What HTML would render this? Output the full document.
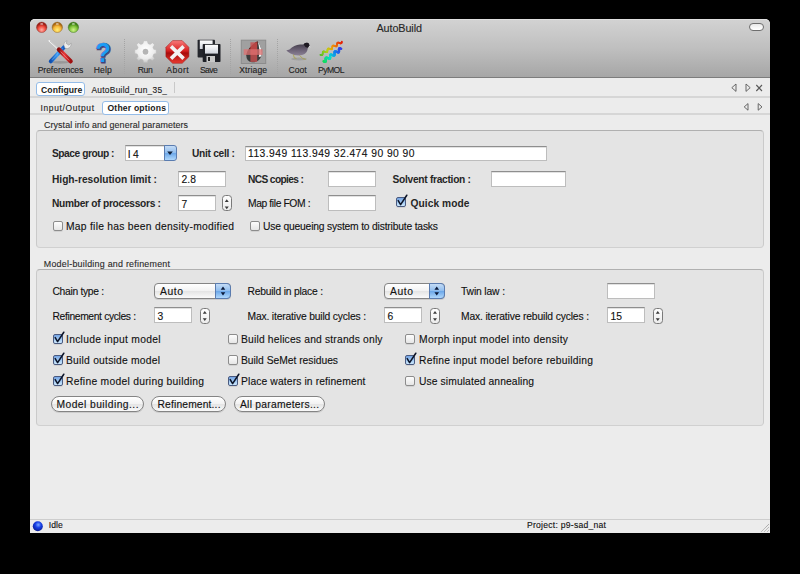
<!DOCTYPE html>
<html><head><meta charset="utf-8">
<style>
html,body{margin:0;padding:0;width:800px;height:574px;overflow:hidden;background:#000;}
body{position:relative;font-family:"Liberation Sans",sans-serif;}
.a{position:absolute;box-sizing:border-box;}
.t{position:absolute;white-space:pre;line-height:normal;font-family:"Liberation Sans",sans-serif;-webkit-text-stroke:0.12px currentColor;}
.win{left:30px;top:18.6px;width:740px;height:514.4px;background:#ececec;border-radius:5px 5px 0 0;overflow:hidden;}
.tb{left:30px;top:18.6px;width:740px;height:58.4px;border-radius:5px 5px 0 0;background:linear-gradient(#d2d2d2,#bfbfbf 50%,#a6a6a6);border-top:1px solid #e0e0e0;}
.grp{background:#e4e4e4;border:1px solid #cacaca;border-top-color:#b0b0b0;border-bottom-color:#d0d0d0;border-radius:4px;}
.fld{background:#fff;border:1px solid #bdbdbd;border-top-color:#8e8e8e;box-shadow:inset 0 1px 0 #e2e2e2;}
.cb{width:10px;height:10px;border:1px solid #8c8c8c;border-radius:2px;background:linear-gradient(#fdfdfd,#e6e6e6);box-shadow:0 1px 0 rgba(0,0,0,0.08);}
.cbc{border-color:#4a5a80;background:linear-gradient(#74a4e4,#a8cef4 60%,#cde8fd);}
.btn{height:16px;border:1px solid #848484;border-radius:8px;background:linear-gradient(#ffffff,#f2f2f2 50%,#e4e4e4 51%,#fafafa);box-shadow:0 1px 0 rgba(0,0,0,0.10);}
.stp{width:10px;height:17px;border:1px solid #7a7a7a;border-radius:3.5px;background:linear-gradient(#fdfdfd,#ececec);}
.sep{border-left:1px dotted #a4a4a4;}
</style></head><body>
<div class="a win"></div>
<div class="a tb"></div>
<div class="a" style="left:30px;top:77px;width:740px;height:1px;background:#7c7c7c"></div>
<!-- traffic lights -->
<svg class="a" style="left:30px;top:18px" width="60" height="20" viewBox="30 18 60 20">
 <defs>
  <radialGradient id="gr" cx="50%" cy="75%" r="60%"><stop offset="0" stop-color="#ffb0a8"/><stop offset="0.6" stop-color="#f04a3c"/><stop offset="1" stop-color="#9a1c14"/></radialGradient>
  <radialGradient id="gy" cx="50%" cy="75%" r="60%"><stop offset="0" stop-color="#fff07a"/><stop offset="0.6" stop-color="#f6b83a"/><stop offset="1" stop-color="#a86410"/></radialGradient>
  <radialGradient id="gg" cx="50%" cy="75%" r="60%"><stop offset="0" stop-color="#d2f48c"/><stop offset="0.6" stop-color="#80c43a"/><stop offset="1" stop-color="#3e7e16"/></radialGradient>
 </defs>
 <circle cx="41.7" cy="27.3" r="5.2" fill="url(#gr)" stroke="#8a3a34" stroke-width="0.5"/>
 <circle cx="57.3" cy="27.3" r="5.2" fill="url(#gy)" stroke="#8a6a30" stroke-width="0.5"/>
 <circle cx="73.4" cy="27.3" r="5.2" fill="url(#gg)" stroke="#4a7a30" stroke-width="0.5"/>
 <ellipse cx="41.7" cy="23.9" rx="1.5" ry="0.9" fill="#fff" opacity="0.55"/>
 <ellipse cx="57.3" cy="23.9" rx="1.5" ry="0.9" fill="#fff" opacity="0.55"/>
 <ellipse cx="73.4" cy="23.9" rx="1.5" ry="0.9" fill="#fff" opacity="0.55"/>
</svg>
<!-- pill -->
<div class="a" style="left:749px;top:23px;width:15px;height:8px;border:1px solid #6e6e6e;border-radius:4px;background:linear-gradient(#e8e8e8,#f8f8f8 60%,#ffffff)"></div>
<!-- toolbar separators -->
<div class="a sep" style="left:124px;top:39px;width:1px;height:35px"></div>
<div class="a sep" style="left:230px;top:39px;width:1px;height:35px"></div>
<div class="a sep" style="left:277px;top:39px;width:1px;height:35px"></div>
<svg class="a" style="left:30px;top:34px" width="330" height="34" viewBox="30 34 330 34">
 <defs>
  <linearGradient id="redh" x1="0" y1="0" x2="1" y2="0"><stop offset="0" stop-color="#8a0c0c"/><stop offset="0.45" stop-color="#e83a3a"/><stop offset="1" stop-color="#a01010"/></linearGradient>
  <linearGradient id="blueh" x1="0" y1="0" x2="1" y2="0"><stop offset="0" stop-color="#1050b0"/><stop offset="0.5" stop-color="#3c9cf4"/><stop offset="1" stop-color="#1258c0"/></linearGradient>
  <radialGradient id="gear" cx="50%" cy="40%" r="60%"><stop offset="0" stop-color="#ffffff"/><stop offset="0.7" stop-color="#ececec"/><stop offset="1" stop-color="#c4c4c4"/></radialGradient>
  <linearGradient id="oct" x1="0" y1="0" x2="0" y2="1"><stop offset="0" stop-color="#f87a7a"/><stop offset="0.45" stop-color="#d82020"/><stop offset="0.55" stop-color="#a80c0c"/><stop offset="1" stop-color="#e83a30"/></linearGradient>
  <linearGradient id="disk" x1="0" y1="0" x2="0" y2="1"><stop offset="0" stop-color="#ffffff"/><stop offset="1" stop-color="#d0d4dc"/></linearGradient>
  <linearGradient id="bird" x1="0" y1="0" x2="0" y2="1"><stop offset="0" stop-color="#3e3844"/><stop offset="0.6" stop-color="#6e6478"/><stop offset="1" stop-color="#8a8094"/></linearGradient>
 </defs>
 <!-- Preferences -->
 <ellipse cx="60.5" cy="62.3" rx="8.5" ry="1.4" fill="#000" opacity="0.14"/>
 <line x1="49.2" y1="40.8" x2="59.5" y2="50.3" stroke="#f6f6f6" stroke-width="1.5" stroke-linecap="round"/>
 <line x1="50" y1="41" x2="59.8" y2="50" stroke="#909090" stroke-width="0.45"/>
 <line x1="64.2" y1="47" x2="50.8" y2="61.4" stroke="url(#blueh)" stroke-width="4" stroke-linecap="round"/>
 <line x1="62.5" y1="48.5" x2="52" y2="59.8" stroke="#7cc4ff" stroke-width="0.8" opacity="0.7"/>
 <line x1="59" y1="49.6" x2="70.6" y2="61.3" stroke="url(#redh)" stroke-width="4.4" stroke-linecap="round"/>
 <line x1="60.6" y1="51.6" x2="69.2" y2="60.4" stroke="#ffa0a0" stroke-width="0.7" opacity="0.8"/>
 <path d="M63.8 45 Q63.6 41.8 67 40.6 L66.2 43.4 L68.8 45.2 L71.2 43.2 Q71.4 47.3 67.6 48.6 L65 48.3 Z" fill="#ececec" stroke="#8a8a8a" stroke-width="0.45"/>
 <!-- Help -->
 <text x="103.8" y="62.8" font-family="Liberation Sans" font-weight="700" font-size="27" text-anchor="middle" fill="#2a2060" stroke="#2a2060" stroke-width="1.0" opacity="0.75" transform="translate(103.2 52) scale(0.95 1) translate(-103.2 -52)">?</text>
 <text x="103.2" y="62.3" font-family="Liberation Sans" font-weight="700" font-size="27" text-anchor="middle" fill="#1c9cf4" stroke="#3a3080" stroke-width="0.6" paint-order="stroke" transform="translate(103.2 52) scale(0.95 1) translate(-103.2 -52)">?</text>
 <!-- Run gear -->
 <g transform="translate(145.5 51.7)">
  <path fill="url(#gear)" stroke="#b8b8b8" stroke-width="0.5" fill-rule="evenodd" d="
   M -1.9 -11 L 1.9 -11 L 2.5 -8.2 L 4.6 -7.3 L 7 -9 L 9.1 -6.9 L 7.4 -4.5 L 8.3 -2.4 L 11 -1.9 L 11 1.9 L 8.3 2.4 L 7.4 4.5 L 9.1 6.9 L 7 9 L 4.6 7.4 L 2.5 8.3 L 1.9 11 L -1.9 11 L -2.5 8.3 L -4.6 7.4 L -7 9 L -9.1 6.9 L -7.4 4.5 L -8.3 2.4 L -11 1.9 L -11 -1.9 L -8.3 -2.4 L -7.4 -4.5 L -9.1 -6.9 L -7 -9 L -4.6 -7.3 L -2.5 -8.2 Z
   M 2.6 0 A 2.6 2.6 0 1 0 -2.6 0 A 2.6 2.6 0 1 0 2.6 0 Z"/>
  <circle r="2.6" fill="#b4b4b4"/>
 </g>
 <!-- Abort -->
 <path d="M172.6 40.6 L182.2 40.6 L188.9 47.3 L188.9 56.7 L182.2 63.3 L172.6 63.3 L165.9 56.7 L165.9 47.3 Z" fill="url(#oct)" stroke="#9a1a1a" stroke-width="0.5"/>
 <path d="M171 46.4 L183.6 58.6 M183.6 46.4 L171 58.6" stroke="#f2f2f2" stroke-width="3.6" stroke-linecap="butt"/>
 <!-- Save -->
 <g>
  <rect x="197.6" y="39.8" width="17.4" height="17.8" rx="0.8" fill="#24262c"/>
  <rect x="199.8" y="40.4" width="12.8" height="8.6" fill="url(#disk)"/>
  <rect x="202.7" y="44" width="17.8" height="18.1" rx="0.8" fill="#1e2026"/>
  <rect x="205" y="44.8" width="13" height="8.8" fill="url(#disk)"/>
  <rect x="206.5" y="56" width="8.5" height="6" fill="#c8c8c8"/>
  <rect x="208" y="57" width="2" height="4" fill="#202020"/>
 </g>
 <!-- Xtriage -->
 <rect x="241.3" y="40.2" width="24.4" height="23.3" fill="#a0a0a0"/>
 <rect x="241.3" y="40.2" width="24.4" height="23.3" fill="none" stroke="#8c8c8c" stroke-width="1"/>
 <path d="M257.6 41.3 Q263.2 49.5 261.2 56.5 Q258.5 62.6 251.8 62.2 Q246 61.2 246.3 54.5 Q247.5 47.5 257.6 41.3 Z" fill="#3a3a3a"/>
 <path d="M257.6 41.3 Q263.2 49.5 261.2 56.5 L258.8 57 Q260.2 49 257.6 41.3 Z" fill="#f0f0f0"/>
 <path d="M257.6 41.3 Q252 44 249 49 L256 50 Q257.5 46 257.6 41.3 Z" fill="#7a1a14"/>
 <rect x="250.4" y="42.3" width="6.8" height="19.6" fill="#c85050" opacity="0.8"/>
 <rect x="243.7" y="49.2" width="18.9" height="5.7" fill="#e07070" opacity="0.75"/>
 <!-- Coot -->
 <ellipse cx="299" cy="59" rx="8" ry="1.5" fill="#000" opacity="0.12"/>
 <path d="M286.3 50.6 L289.5 49.6 Q294 45 300 44.6 L303.5 44.4 Q305 42.6 307.3 42.8 Q309.3 43.2 309.4 45.2 L310.4 47 L308.6 46.6 Q307.6 48 307.3 50.5 Q306 54.6 300.5 55.3 Q294.5 55.8 290.5 53.4 Q288 52 286.3 50.6 Z" fill="url(#bird)"/>
 <path d="M303.6 44.2 Q305 42.6 307.3 42.8 Q309.3 43.2 309.4 45.2 Q309 47 307.5 47.8 Q305 47.5 303.6 44.2 Z" fill="#1e1a22"/>
 <path d="M309.2 45.4 L311 47.2 L308.8 46.8 Z" fill="#e8e8e8"/>
 <path d="M293.5 54.6 L294.2 57.8 L296.4 58.4 M299.5 55.3 L302.8 58.6 L305.8 59.3" stroke="#a8a040" stroke-width="0.8" fill="none"/>
 <!-- PyMOL -->
<g stroke-width="1.7" stroke-linecap="round" fill="none">
<line x1="320.30" y1="54.80" x2="320.94" y2="55.04" stroke="#52be27"/>
<line x1="320.94" y1="55.04" x2="321.53" y2="55.18" stroke="#57bf26"/>
<line x1="321.53" y1="55.18" x2="322.00" y2="55.14" stroke="#5dc025"/>
<line x1="322.00" y1="55.14" x2="322.33" y2="54.88" stroke="#62c124"/>
<line x1="322.33" y1="54.88" x2="322.54" y2="54.41" stroke="#67c223"/>
<line x1="322.54" y1="54.41" x2="322.65" y2="53.79" stroke="#6cc322"/>
<line x1="322.65" y1="53.79" x2="322.71" y2="53.09" stroke="#72c421"/>
<line x1="322.71" y1="53.09" x2="322.80" y2="52.43" stroke="#77c520"/>
<line x1="322.80" y1="52.43" x2="322.96" y2="51.90" stroke="#7cc61f"/>
<line x1="322.96" y1="51.90" x2="323.25" y2="51.56" stroke="#81c71e"/>
<line x1="323.25" y1="51.56" x2="323.68" y2="51.45" stroke="#87c81e"/>
<line x1="323.68" y1="51.45" x2="324.23" y2="51.54" stroke="#8cc81d"/>
<line x1="324.23" y1="51.54" x2="324.86" y2="51.76" stroke="#91c91c"/>
<line x1="324.86" y1="51.76" x2="325.51" y2="52.01" stroke="#96ca1b"/>
<line x1="325.51" y1="52.01" x2="326.12" y2="52.20" stroke="#9bcb1a"/>
<line x1="326.12" y1="52.20" x2="326.63" y2="52.22" stroke="#a1cc19"/>
<line x1="326.63" y1="52.22" x2="327.02" y2="52.04" stroke="#a6cd18"/>
<line x1="327.02" y1="52.04" x2="327.26" y2="51.64" stroke="#abce17"/>
<line x1="327.26" y1="51.64" x2="327.39" y2="51.05" stroke="#b0cf16"/>
<line x1="327.39" y1="51.05" x2="327.47" y2="50.37" stroke="#b6d015"/>
<line x1="327.47" y1="50.37" x2="327.54" y2="49.68" stroke="#bbd114"/>
<line x1="327.54" y1="49.68" x2="327.67" y2="49.10" stroke="#bfd013"/>
<line x1="327.67" y1="49.10" x2="327.92" y2="48.69" stroke="#c3cc13"/>
<line x1="327.92" y1="48.69" x2="328.30" y2="48.51" stroke="#c6c712"/>
<line x1="328.30" y1="48.51" x2="328.81" y2="48.54" stroke="#c9c411"/>
<line x1="328.81" y1="48.54" x2="329.42" y2="48.72" stroke="#cdc010"/>
<line x1="329.42" y1="48.72" x2="330.07" y2="48.97" stroke="#d0bc10"/>
<line x1="330.07" y1="48.97" x2="330.70" y2="49.19" stroke="#d3b80f"/>
<line x1="330.70" y1="49.19" x2="331.25" y2="49.28" stroke="#d7b40f"/>
<line x1="331.25" y1="49.28" x2="331.68" y2="49.17" stroke="#dab00e"/>
<line x1="331.68" y1="49.17" x2="331.97" y2="48.84" stroke="#ddac0d"/>
<line x1="331.97" y1="48.84" x2="332.14" y2="48.31" stroke="#e1a80c"/>
<line x1="332.14" y1="48.31" x2="332.22" y2="47.64" stroke="#e4a30c"/>
<line x1="332.22" y1="47.64" x2="332.29" y2="46.95" stroke="#e7a00b"/>
<line x1="332.29" y1="46.95" x2="332.40" y2="46.32" stroke="#eb9c0b"/>
<line x1="332.40" y1="46.32" x2="332.60" y2="45.85" stroke="#ee980a"/>
<line x1="332.60" y1="45.85" x2="332.93" y2="45.59" stroke="#ef930a"/>
<line x1="332.93" y1="45.59" x2="333.41" y2="45.55" stroke="#ef8e0a"/>
<line x1="333.41" y1="45.55" x2="333.99" y2="45.69" stroke="#ee890a"/>
<line x1="333.99" y1="45.69" x2="334.63" y2="45.93" stroke="#ee840a"/>
<line x1="334.63" y1="45.93" x2="335.28" y2="46.17" stroke="#ee7f0a"/>
<line x1="335.28" y1="46.17" x2="335.86" y2="46.32" stroke="#ed7a0a"/>
<line x1="335.86" y1="46.32" x2="336.33" y2="46.28" stroke="#ed750a"/>
<line x1="336.33" y1="46.28" x2="336.67" y2="46.02" stroke="#ec700a"/>
<line x1="336.67" y1="46.02" x2="336.87" y2="45.55" stroke="#ec6b0a"/>
<line x1="336.87" y1="45.55" x2="336.98" y2="44.92" stroke="#ec660a"/>
<line x1="336.98" y1="44.92" x2="337.04" y2="44.22" stroke="#eb610a"/>
<line x1="337.04" y1="44.22" x2="337.13" y2="43.56" stroke="#eb5c0a"/>
<line x1="337.13" y1="43.56" x2="337.30" y2="43.03" stroke="#ea570a"/>
<line x1="337.30" y1="43.03" x2="337.59" y2="42.70" stroke="#ea520a"/>
<line x1="337.59" y1="42.70" x2="338.01" y2="42.59" stroke="#e94d0a"/>
<line x1="338.01" y1="42.59" x2="338.56" y2="42.67" stroke="#e9480a"/>
<line x1="338.56" y1="42.67" x2="339.19" y2="42.89" stroke="#e9430a"/>
<line x1="339.19" y1="42.89" x2="339.85" y2="43.15" stroke="#e83e0a"/>
<line x1="339.85" y1="43.15" x2="340.45" y2="43.33" stroke="#e8390a"/>
<line x1="340.45" y1="43.33" x2="340.97" y2="43.36" stroke="#e7340a"/>
<line x1="340.97" y1="43.36" x2="341.35" y2="43.17" stroke="#e72f0a"/>
<line x1="341.35" y1="43.17" x2="341.59" y2="42.77" stroke="#e72a0a"/>
<line x1="341.59" y1="42.77" x2="341.73" y2="42.18" stroke="#e6250a"/>
<line x1="341.73" y1="42.18" x2="341.80" y2="41.50" stroke="#e6200a"/>
</g>
<g stroke-width="2.3" stroke-linecap="round" fill="none">
<line x1="323.50" y1="61.30" x2="324.12" y2="61.56" stroke="#13dc52"/>
<line x1="324.12" y1="61.56" x2="324.69" y2="61.73" stroke="#13dc58"/>
<line x1="324.69" y1="61.73" x2="325.15" y2="61.76" stroke="#12dc5d"/>
<line x1="325.15" y1="61.76" x2="325.48" y2="61.60" stroke="#12dc62"/>
<line x1="325.48" y1="61.60" x2="325.67" y2="61.25" stroke="#12dc68"/>
<line x1="325.67" y1="61.25" x2="325.74" y2="60.72" stroke="#11dc6d"/>
<line x1="325.74" y1="60.72" x2="325.73" y2="60.08" stroke="#11dc73"/>
<line x1="325.73" y1="60.08" x2="325.69" y2="59.40" stroke="#10dc78"/>
<line x1="325.69" y1="59.40" x2="325.68" y2="58.75" stroke="#10dc7e"/>
<line x1="325.68" y1="58.75" x2="325.75" y2="58.23" stroke="#10dc83"/>
<line x1="325.75" y1="58.23" x2="325.94" y2="57.87" stroke="#0fdc88"/>
<line x1="325.94" y1="57.87" x2="326.27" y2="57.71" stroke="#0fdc8e"/>
<line x1="326.27" y1="57.71" x2="326.73" y2="57.74" stroke="#0edc93"/>
<line x1="326.73" y1="57.74" x2="327.30" y2="57.92" stroke="#0edc99"/>
<line x1="327.30" y1="57.92" x2="327.93" y2="58.17" stroke="#0ddc9e"/>
<line x1="327.93" y1="58.17" x2="328.55" y2="58.43" stroke="#0ddca3"/>
<line x1="328.55" y1="58.43" x2="329.12" y2="58.61" stroke="#0ddca9"/>
<line x1="329.12" y1="58.61" x2="329.58" y2="58.64" stroke="#0cdcae"/>
<line x1="329.58" y1="58.64" x2="329.91" y2="58.48" stroke="#0cdcb4"/>
<line x1="329.91" y1="58.48" x2="330.10" y2="58.12" stroke="#0bdcb9"/>
<line x1="330.10" y1="58.12" x2="330.17" y2="57.60" stroke="#0bdcbf"/>
<line x1="330.17" y1="57.60" x2="330.16" y2="56.95" stroke="#0bdcc4"/>
<line x1="330.16" y1="56.95" x2="330.12" y2="56.27" stroke="#0adcc9"/>
<line x1="330.12" y1="56.27" x2="330.11" y2="55.63" stroke="#0adccf"/>
<line x1="330.11" y1="55.63" x2="330.18" y2="55.10" stroke="#0ad9d2"/>
<line x1="330.18" y1="55.10" x2="330.37" y2="54.75" stroke="#0ad4d4"/>
<line x1="330.37" y1="54.75" x2="330.70" y2="54.59" stroke="#0bcfd6"/>
<line x1="330.70" y1="54.59" x2="331.16" y2="54.62" stroke="#0bcad7"/>
<line x1="331.16" y1="54.62" x2="331.73" y2="54.79" stroke="#0cc5d9"/>
<line x1="331.73" y1="54.79" x2="332.35" y2="55.05" stroke="#0dc0db"/>
<line x1="332.35" y1="55.05" x2="332.97" y2="55.31" stroke="#0dbbdc"/>
<line x1="332.97" y1="55.31" x2="333.54" y2="55.48" stroke="#0eb6de"/>
<line x1="333.54" y1="55.48" x2="334.00" y2="55.51" stroke="#0eb1e0"/>
<line x1="334.00" y1="55.51" x2="334.33" y2="55.35" stroke="#0face1"/>
<line x1="334.33" y1="55.35" x2="334.52" y2="55.00" stroke="#0fa7e3"/>
<line x1="334.52" y1="55.00" x2="334.59" y2="54.47" stroke="#10a2e5"/>
<line x1="334.59" y1="54.47" x2="334.58" y2="53.83" stroke="#109de6"/>
<line x1="334.58" y1="53.83" x2="334.54" y2="53.15" stroke="#1198e8"/>
<line x1="334.54" y1="53.15" x2="334.53" y2="52.50" stroke="#1293ea"/>
<line x1="334.53" y1="52.50" x2="334.60" y2="51.98" stroke="#128eeb"/>
<line x1="334.60" y1="51.98" x2="334.79" y2="51.62" stroke="#1389ed"/>
<line x1="334.79" y1="51.62" x2="335.12" y2="51.46" stroke="#1384ef"/>
<line x1="335.12" y1="51.46" x2="335.58" y2="51.49" stroke="#1480ef"/>
<line x1="335.58" y1="51.49" x2="336.15" y2="51.67" stroke="#167cef"/>
<line x1="336.15" y1="51.67" x2="336.77" y2="51.92" stroke="#1878ee"/>
<line x1="336.77" y1="51.92" x2="337.40" y2="52.18" stroke="#1974ee"/>
<line x1="337.40" y1="52.18" x2="337.97" y2="52.36" stroke="#1b70ed"/>
<line x1="337.97" y1="52.36" x2="338.43" y2="52.39" stroke="#1d6cec"/>
<line x1="338.43" y1="52.39" x2="338.76" y2="52.23" stroke="#1e68ec"/>
<line x1="338.76" y1="52.23" x2="338.95" y2="51.87" stroke="#2064eb"/>
<line x1="338.95" y1="51.87" x2="339.02" y2="51.35" stroke="#2260eb"/>
<line x1="339.02" y1="51.35" x2="339.01" y2="50.70" stroke="#235dea"/>
<line x1="339.01" y1="50.70" x2="338.97" y2="50.02" stroke="#2559ea"/>
<line x1="338.97" y1="50.02" x2="338.96" y2="49.38" stroke="#2755e9"/>
<line x1="338.96" y1="49.38" x2="339.03" y2="48.85" stroke="#2851e9"/>
<line x1="339.03" y1="48.85" x2="339.22" y2="48.50" stroke="#2a4de8"/>
<line x1="339.22" y1="48.50" x2="339.55" y2="48.34" stroke="#2c49e7"/>
<line x1="339.55" y1="48.34" x2="340.01" y2="48.37" stroke="#2d45e7"/>
<line x1="340.01" y1="48.37" x2="340.58" y2="48.54" stroke="#2f41e6"/>
<line x1="340.58" y1="48.54" x2="341.20" y2="48.80" stroke="#313de6"/>
</g>
</svg>

<!-- tab bars -->
<div class="a" style="left:30px;top:96px;width:740px;height:1.5px;background:#d6d6d6"></div>
<div class="a" style="left:30px;top:113px;width:740px;height:1.5px;background:#d6d6d6"></div>
<div class="a" style="left:36px;top:82px;width:49px;height:14px;background:#fff;border:1.5px solid #94bce8;border-radius:3px"></div>
<div class="a" style="left:174px;top:82px;width:1px;height:11px;background:#c9c9c9"></div>
<div class="a" style="left:102px;top:100.5px;width:67px;height:14px;background:#fff;border:1.5px solid #94bce8;border-radius:3px"></div>
<svg class="a" style="left:725px;top:80px" width="45" height="35" viewBox="725 80 45 35">
 <g fill="none" stroke="#5a5a5a" stroke-width="0.9">
  <path d="M736 84 L731.8 87.7 L736 91.4 Z"/>
  <path d="M746 84 L750.2 87.7 L746 91.4 Z"/>
  <path d="M756.3 85 L762 91 M762 85 L756.3 91" stroke-width="1.1"/>
  <path d="M748 103.6 L744.2 106.9 L748 110.2 Z"/>
  <path d="M758.2 103.6 L762 106.9 L758.2 110.2 Z"/>
 </g>
</svg>
<!-- groups -->
<div class="a grp" style="left:36px;top:130px;width:728px;height:118px"></div>
<div class="a grp" style="left:36px;top:269px;width:728px;height:157px"></div>
<!-- group 1 controls -->
<div class="a fld" style="left:124.5px;top:145px;width:41px;height:15.5px"></div>
<div class="a" style="left:164px;top:145px;width:12.5px;height:15.5px;border-radius:0 3px 3px 0;border:1px solid #5a7cb0;background:linear-gradient(#c4dcf6,#8ebcee 50%,#6aa6e8 51%,#b0d8fc)"></div>
<svg class="a" style="left:164px;top:145px" width="12" height="16"><path d="M3.2 6.5 L8.8 6.5 L6 10 Z" fill="#10203a"/></svg>
<div class="a fld" style="left:244.5px;top:145.5px;width:302px;height:15.5px"></div>
<div class="a fld" style="left:178px;top:171px;width:48px;height:16px"></div>
<div class="a fld" style="left:327.5px;top:171px;width:48.5px;height:16px"></div>
<div class="a fld" style="left:490.5px;top:171px;width:75.5px;height:16px"></div>
<div class="a fld" style="left:178px;top:195px;width:38px;height:16.2px"></div>
<div class="a stp" style="left:222px;top:195px;width:9.7px;height:16.2px"></div>
<div class="a fld" style="left:327.5px;top:195px;width:48.5px;height:16.2px"></div>
<div class="a cb cbc" style="left:396px;top:197px"></div>
<div class="a cb" style="left:52.5px;top:220.5px"></div>
<div class="a cb" style="left:249.5px;top:220.5px"></div>
<!-- group 2 controls -->
<div class="a btn" style="left:154px;top:283px;width:77px;height:16px;border-radius:4px"></div>
<div class="a" style="left:215px;top:283px;width:16px;height:16px;border-radius:0 4px 4px 0;border:1px solid #5a7cb0;background:linear-gradient(#c4dcf6,#8ebcee 50%,#6aa6e8 51%,#b0d8fc)"></div>
<div class="a btn" style="left:384px;top:283px;width:60.5px;height:16px;border-radius:4px"></div>
<div class="a" style="left:429px;top:283px;width:15.5px;height:16px;border-radius:0 4px 4px 0;border:1px solid #5a7cb0;background:linear-gradient(#c4dcf6,#8ebcee 50%,#6aa6e8 51%,#b0d8fc)"></div>
<div class="a fld" style="left:607px;top:282.5px;width:47.5px;height:16.5px"></div>
<div class="a fld" style="left:154px;top:307px;width:37.5px;height:16px"></div>
<div class="a stp" style="left:200px;top:307.5px;width:9.5px;height:16px"></div>
<div class="a fld" style="left:384px;top:307px;width:38px;height:16px"></div>
<div class="a stp" style="left:430px;top:307.5px;width:10px;height:16px"></div>
<div class="a fld" style="left:607px;top:307px;width:37.5px;height:16px"></div>
<div class="a stp" style="left:653px;top:307.5px;width:9.5px;height:16px"></div>
<div class="a cb cbc" style="left:52.5px;top:334px"></div>
<div class="a cb cbc" style="left:52.5px;top:355px"></div>
<div class="a cb cbc" style="left:52.5px;top:376px"></div>
<div class="a cb" style="left:227.5px;top:334px"></div>
<div class="a cb" style="left:227.5px;top:355px"></div>
<div class="a cb cbc" style="left:227.5px;top:376px"></div>
<div class="a cb" style="left:404.5px;top:334px"></div>
<div class="a cb cbc" style="left:404.5px;top:355px"></div>
<div class="a cb" style="left:404.5px;top:376px"></div>
<div class="a btn" style="left:50.5px;top:396px;width:93px;height:15.5px"></div>
<div class="a btn" style="left:150.5px;top:396px;width:75.5px;height:15.5px"></div>
<div class="a btn" style="left:234px;top:396px;width:91px;height:15.5px"></div>
<svg class="a" style="left:395px;top:194px" width="14" height="14" viewBox="0 0 14 14"><path d="M3.2 6.6 L5.6 10.6 L11.8 1.2" fill="none" stroke="#0c1428" stroke-width="1.55" stroke-linejoin="round" stroke-linecap="round"/></svg>
<svg class="a" style="left:51.5px;top:331px" width="14" height="14" viewBox="0 0 14 14"><path d="M3.2 6.6 L5.6 10.6 L11.8 1.2" fill="none" stroke="#0c1428" stroke-width="1.55" stroke-linejoin="round" stroke-linecap="round"/></svg>
<svg class="a" style="left:51.5px;top:352px" width="14" height="14" viewBox="0 0 14 14"><path d="M3.2 6.6 L5.6 10.6 L11.8 1.2" fill="none" stroke="#0c1428" stroke-width="1.55" stroke-linejoin="round" stroke-linecap="round"/></svg>
<svg class="a" style="left:51.5px;top:373px" width="14" height="14" viewBox="0 0 14 14"><path d="M3.2 6.6 L5.6 10.6 L11.8 1.2" fill="none" stroke="#0c1428" stroke-width="1.55" stroke-linejoin="round" stroke-linecap="round"/></svg>
<svg class="a" style="left:226.5px;top:373px" width="14" height="14" viewBox="0 0 14 14"><path d="M3.2 6.6 L5.6 10.6 L11.8 1.2" fill="none" stroke="#0c1428" stroke-width="1.55" stroke-linejoin="round" stroke-linecap="round"/></svg>
<svg class="a" style="left:403.5px;top:352px" width="14" height="14" viewBox="0 0 14 14"><path d="M3.2 6.6 L5.6 10.6 L11.8 1.2" fill="none" stroke="#0c1428" stroke-width="1.55" stroke-linejoin="round" stroke-linecap="round"/></svg>
<svg class="a" style="left:222px;top:195.5px" width="9.5" height="16.5" viewBox="0 0 9.5 16.5"><path d="M2.75 6.05 L6.75 6.05 L4.75 3.35 Z M2.75 10.45 L6.75 10.45 L4.75 13.15 Z" fill="#3a3a3a"/></svg>
<svg class="a" style="left:200px;top:307.5px" width="9.5" height="16" viewBox="0 0 9.5 16"><path d="M2.75 5.80 L6.75 5.80 L4.75 3.10 Z M2.75 10.20 L6.75 10.20 L4.75 12.90 Z" fill="#3a3a3a"/></svg>
<svg class="a" style="left:430px;top:307.5px" width="10" height="16" viewBox="0 0 10 16"><path d="M3.00 5.80 L7.00 5.80 L5.00 3.10 Z M3.00 10.20 L7.00 10.20 L5.00 12.90 Z" fill="#3a3a3a"/></svg>
<svg class="a" style="left:653px;top:307.5px" width="9.5" height="16" viewBox="0 0 9.5 16"><path d="M2.75 5.80 L6.75 5.80 L4.75 3.10 Z M2.75 10.20 L6.75 10.20 L4.75 12.90 Z" fill="#3a3a3a"/></svg>
<svg class="a" style="left:215px;top:283px" width="16" height="16" viewBox="0 0 16 16"><path d="M5.70 6.80 L10.30 6.80 L8.00 3.40 Z M5.70 9.20 L10.30 9.20 L8.00 12.60 Z" fill="#0a1a3a"/></svg>
<svg class="a" style="left:429px;top:283px" width="15.5" height="16" viewBox="0 0 15.5 16"><path d="M5.45 6.80 L10.05 6.80 L7.75 3.40 Z M5.45 9.20 L10.05 9.20 L7.75 12.60 Z" fill="#0a1a3a"/></svg>
<!-- status -->

<div class="a" style="left:30px;top:519px;width:740px;height:1px;background:#cdcdcd"></div>
<div class="a" style="left:30px;top:520px;width:740px;height:13px;background:#ececec"></div>
<svg class="a" style="left:30px;top:518px" width="20" height="16" viewBox="30 518 20 16">
 <defs><radialGradient id="gb" cx="55%" cy="35%" r="65%"><stop offset="0" stop-color="#7aa8ff"/><stop offset="0.45" stop-color="#1840e8"/><stop offset="1" stop-color="#0a1c90"/></radialGradient></defs>
 <circle cx="37.8" cy="526.3" r="5" fill="url(#gb)"/>
</svg>
<svg class="a" style="left:760px;top:522px" width="10" height="11" viewBox="760 522 10 11">
 <g stroke="#7a7a7a" stroke-width="0.8" stroke-dasharray="1 0.6">
  <path d="M761.5 531.5 L769 524"/>
  <path d="M764.5 531.5 L769 527"/>
  <path d="M767.5 531.5 L769 530"/>
 </g>
</svg>

<div class='t' style='left:376.50px;top:21.83px;font-size:10.8px;font-weight:400;color:#262626;letter-spacing:-0.092px;'>AutoBuild</div>
<div class='t' style='left:37.70px;top:65.12px;font-size:8.6px;font-weight:400;color:#222;letter-spacing:-0.064px;-webkit-text-stroke:0.12px currentColor;'>Preferences</div>
<div class='t' style='left:93.70px;top:65.12px;font-size:8.6px;font-weight:400;color:#222;letter-spacing:0.138px;-webkit-text-stroke:0.12px currentColor;'>Help</div>
<div class='t' style='left:137.80px;top:65.12px;font-size:8.6px;font-weight:400;color:#222;letter-spacing:-0.383px;-webkit-text-stroke:0.12px currentColor;'>Run</div>
<div class='t' style='left:166.30px;top:65.12px;font-size:8.6px;font-weight:400;color:#222;letter-spacing:0.438px;-webkit-text-stroke:0.12px currentColor;'>Abort</div>
<div class='t' style='left:199.90px;top:65.12px;font-size:8.6px;font-weight:400;color:#222;letter-spacing:-0.598px;-webkit-text-stroke:0.12px currentColor;'>Save</div>
<div class='t' style='left:239.20px;top:65.12px;font-size:8.6px;font-weight:400;color:#222;letter-spacing:0.111px;-webkit-text-stroke:0.12px currentColor;'>Xtriage</div>
<div class='t' style='left:288.50px;top:65.12px;font-size:8.6px;font-weight:400;color:#222;letter-spacing:0.015px;-webkit-text-stroke:0.12px currentColor;'>Coot</div>
<div class='t' style='left:318.00px;top:65.12px;font-size:8.6px;font-weight:400;color:#222;letter-spacing:-0.539px;-webkit-text-stroke:0.12px currentColor;'>PyMOL</div>
<div class='t' style='left:41.00px;top:84.72px;font-size:8.6px;font-weight:700;color:#1a1a1a;letter-spacing:0.090px;-webkit-text-stroke:0px;'>Configure</div>
<div class='t' style='left:91.50px;top:84.50px;font-size:8.4px;font-weight:400;color:#222;letter-spacing:0.266px;-webkit-text-stroke:0.12px currentColor;'>AutoBuild_run_35_</div>
<div class='t' style='left:40.50px;top:103.40px;font-size:8.4px;font-weight:400;color:#222;letter-spacing:0.672px;-webkit-text-stroke:0.12px currentColor;'>Input/Output</div>
<div class='t' style='left:107.50px;top:103.27px;font-size:8.6px;font-weight:700;color:#1a1a1a;letter-spacing:0.180px;-webkit-text-stroke:0px;'>Other options</div>
<div class='t' style='left:44.00px;top:119.85px;font-size:8.9px;font-weight:400;color:#2a2a2a;letter-spacing:0.085px;-webkit-text-stroke:0.12px currentColor;'>Crystal info and general parameters</div>
<div class='t' style='left:43.80px;top:258.75px;font-size:8.9px;font-weight:400;color:#2a2a2a;letter-spacing:0.243px;-webkit-text-stroke:0.12px currentColor;'>Model-building and refinement</div>
<div class='t' style='left:52.00px;top:147.77px;font-size:10.2px;font-weight:700;color:#262626;letter-spacing:-0.453px;-webkit-text-stroke:0px;'>Space group :</div>
<div class='t' style='left:127.80px;top:148.88px;font-size:10.3px;font-weight:400;color:#111;letter-spacing:-0.227px;'>I 4</div>
<div class='t' style='left:192.00px;top:147.77px;font-size:10.2px;font-weight:700;color:#262626;letter-spacing:-0.286px;-webkit-text-stroke:0px;'>Unit cell :</div>
<div class='t' style='left:248.00px;top:148.18px;font-size:10.3px;font-weight:400;color:#111;letter-spacing:0.447px;'>113.949 113.949 32.474 90 90 90</div>
<div class='t' style='left:52.00px;top:173.57px;font-size:10.2px;font-weight:700;color:#262626;letter-spacing:-0.012px;-webkit-text-stroke:0px;'>High-resolution limit :</div>
<div class='t' style='left:181.50px;top:173.98px;font-size:10.3px;font-weight:400;color:#111;letter-spacing:0.086px;'>2.8</div>
<div class='t' style='left:248.00px;top:173.57px;font-size:10.2px;font-weight:700;color:#262626;letter-spacing:-0.622px;-webkit-text-stroke:0px;'>NCS copies :</div>
<div class='t' style='left:392.50px;top:173.57px;font-size:10.2px;font-weight:700;color:#262626;letter-spacing:-0.278px;-webkit-text-stroke:0px;'>Solvent fraction :</div>
<div class='t' style='left:52.00px;top:198.27px;font-size:10.2px;font-weight:700;color:#262626;letter-spacing:-0.282px;-webkit-text-stroke:0px;'>Number of processors :</div>
<div class='t' style='left:181.50px;top:198.68px;font-size:10.3px;font-weight:400;color:#111;letter-spacing:0.000px;'>7</div>
<div class='t' style='left:248.00px;top:198.48px;font-size:10.3px;font-weight:400;color:#111;letter-spacing:-0.386px;'>Map file FOM :</div>
<div class='t' style='left:410.50px;top:198.27px;font-size:10.2px;font-weight:700;color:#262626;letter-spacing:0.076px;-webkit-text-stroke:0px;'>Quick mode</div>
<div class='t' style='left:66.00px;top:220.58px;font-size:10.3px;font-weight:400;color:#111;letter-spacing:0.269px;'>Map file has been density-modified</div>
<div class='t' style='left:263.00px;top:220.58px;font-size:10.3px;font-weight:400;color:#111;letter-spacing:-0.185px;'>Use queueing system to distribute tasks</div>
<div class='t' style='left:52.50px;top:285.88px;font-size:10.3px;font-weight:400;color:#111;letter-spacing:-0.314px;'>Chain type :</div>
<div class='t' style='left:160.00px;top:285.88px;font-size:10.3px;font-weight:400;color:#111;letter-spacing:0.604px;'>Auto</div>
<div class='t' style='left:247.50px;top:285.88px;font-size:10.3px;font-weight:400;color:#111;letter-spacing:-0.206px;'>Rebuild in place :</div>
<div class='t' style='left:390.00px;top:285.88px;font-size:10.3px;font-weight:400;color:#111;letter-spacing:0.604px;'>Auto</div>
<div class='t' style='left:461.00px;top:285.88px;font-size:10.3px;font-weight:400;color:#111;letter-spacing:-0.135px;'>Twin law :</div>
<div class='t' style='left:52.50px;top:310.68px;font-size:10.3px;font-weight:400;color:#111;letter-spacing:-0.353px;'>Refinement cycles :</div>
<div class='t' style='left:157.50px;top:310.88px;font-size:10.3px;font-weight:400;color:#111;letter-spacing:0.000px;'>3</div>
<div class='t' style='left:247.50px;top:310.68px;font-size:10.3px;font-weight:400;color:#111;letter-spacing:-0.162px;'>Max. iterative build cycles :</div>
<div class='t' style='left:387.50px;top:310.88px;font-size:10.3px;font-weight:400;color:#111;letter-spacing:0.000px;'>6</div>
<div class='t' style='left:461.00px;top:310.68px;font-size:10.3px;font-weight:400;color:#111;letter-spacing:-0.140px;'>Max. iterative rebuild cycles :</div>
<div class='t' style='left:610.50px;top:310.88px;font-size:10.3px;font-weight:400;color:#111;letter-spacing:0.031px;'>15</div>
<div class='t' style='left:66.00px;top:334.18px;font-size:10.3px;font-weight:400;color:#111;letter-spacing:0.288px;'>Include input model</div>
<div class='t' style='left:66.00px;top:355.28px;font-size:10.3px;font-weight:400;color:#111;letter-spacing:0.229px;'>Build outside model</div>
<div class='t' style='left:66.00px;top:376.38px;font-size:10.3px;font-weight:400;color:#111;letter-spacing:0.277px;'>Refine model during building</div>
<div class='t' style='left:241.00px;top:334.18px;font-size:10.3px;font-weight:400;color:#111;letter-spacing:0.182px;'>Build helices and strands only</div>
<div class='t' style='left:241.00px;top:355.28px;font-size:10.3px;font-weight:400;color:#111;letter-spacing:-0.016px;'>Build SeMet residues</div>
<div class='t' style='left:241.00px;top:376.38px;font-size:10.3px;font-weight:400;color:#111;letter-spacing:0.126px;'>Place waters in refinement</div>
<div class='t' style='left:419.00px;top:334.18px;font-size:10.3px;font-weight:400;color:#111;letter-spacing:0.302px;'>Morph input model into density</div>
<div class='t' style='left:419.00px;top:355.28px;font-size:10.3px;font-weight:400;color:#111;letter-spacing:0.245px;'>Refine input model before rebuilding</div>
<div class='t' style='left:419.00px;top:376.38px;font-size:10.3px;font-weight:400;color:#111;letter-spacing:0.102px;'>Use simulated annealing</div>
<div class='t' style='left:56.50px;top:398.58px;font-size:10.3px;font-weight:400;color:#111;letter-spacing:0.438px;'>Model building...</div>
<div class='t' style='left:157.50px;top:398.58px;font-size:10.3px;font-weight:400;color:#111;letter-spacing:0.146px;'>Refinement...</div>
<div class='t' style='left:240.00px;top:398.58px;font-size:10.3px;font-weight:400;color:#111;letter-spacing:0.252px;'>All parameters...</div>
<div class='t' style='left:48.80px;top:520.42px;font-size:8.6px;font-weight:400;color:#111;letter-spacing:0.047px;-webkit-text-stroke:0.12px currentColor;'>Idle</div>
<div class='t' style='left:527.00px;top:520.42px;font-size:8.6px;font-weight:400;color:#111;letter-spacing:0.248px;-webkit-text-stroke:0.12px currentColor;'>Project: p9-sad_nat</div>
</body></html>
